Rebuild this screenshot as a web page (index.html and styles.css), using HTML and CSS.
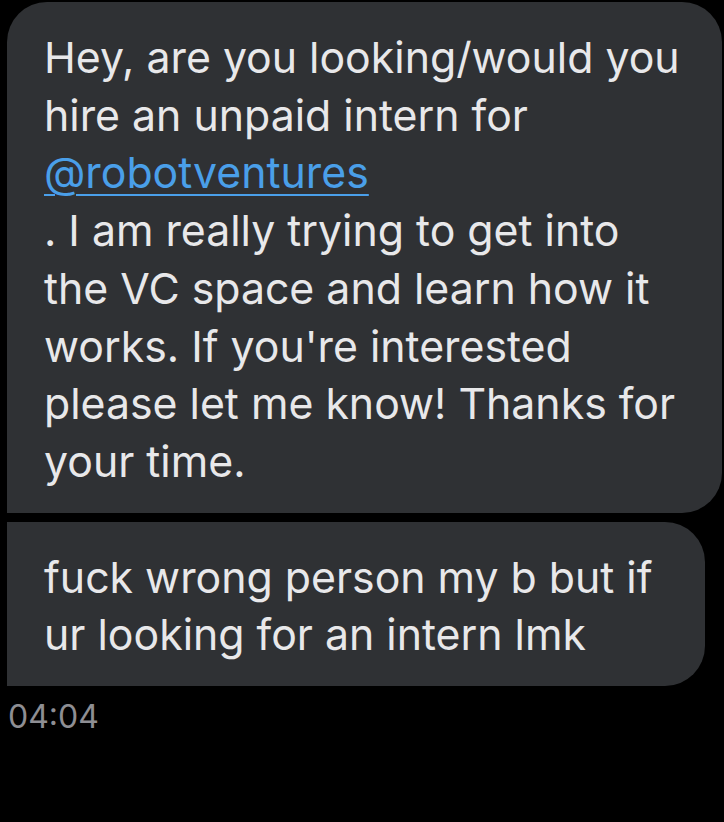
FILE: index.html
```
<!DOCTYPE html>
<html>
<head>
<meta charset="utf-8">
<link rel="stylesheet" href="styles.css">
</head>
<body>
<div class="thread">
  <div class="bubble bubble-first">
    <p class="msg">Hey, are you looking/would you<br>hire an unpaid intern for<br><a class="mention" href="#">@robotventures</a><br>. I am really trying to get into<br>the VC space and learn how it<br>works. If you're interested<br>please let me know! Thanks for<br>your time.</p>
  </div>
  <div class="bubble bubble-last">
    <p class="msg">fuck wrong person my b but if<br>ur looking for an intern lmk</p>
  </div>
  <div class="time">04:04</div>
</div>
</body>
</html>
```
FILE: styles.css
```
html, body {
  margin: 0;
  padding: 0;
  background: #000;
}
body {
  width: 724px;
  height: 822px;
  overflow: hidden;
  font-family: Inter, "Open Sans", "Liberation Sans", sans-serif;
}
.thread {
  display: flex;
  flex-direction: column;
  align-items: flex-start;
  padding: 2px 0 0 7px;
}
.bubble {
  background: #2f3134;
  box-sizing: border-box;
  padding: 27px 10px 22px 37px;
}
.bubble-first {
  width: 715px;
  border-radius: 40px 40px 40px 0;
}
.bubble-last {
  width: 698px;
  margin-top: 9px;
  border-radius: 0 40px 40px 0;
}
.msg {
  margin: 0;
  color: #e8e8ea;
  font-size: 42.8px;
  line-height: 57.7px;
  white-space: nowrap;
}
.mention {
  color: #4a9fe9;
  text-decoration: underline;
  text-decoration-thickness: 2px;
  text-underline-offset: 6px;
}
.time {
  margin-top: 12px;
  padding-left: 1px;
  color: #8e8e93;
  font-size: 32px;
  line-height: 38px;
}
```
